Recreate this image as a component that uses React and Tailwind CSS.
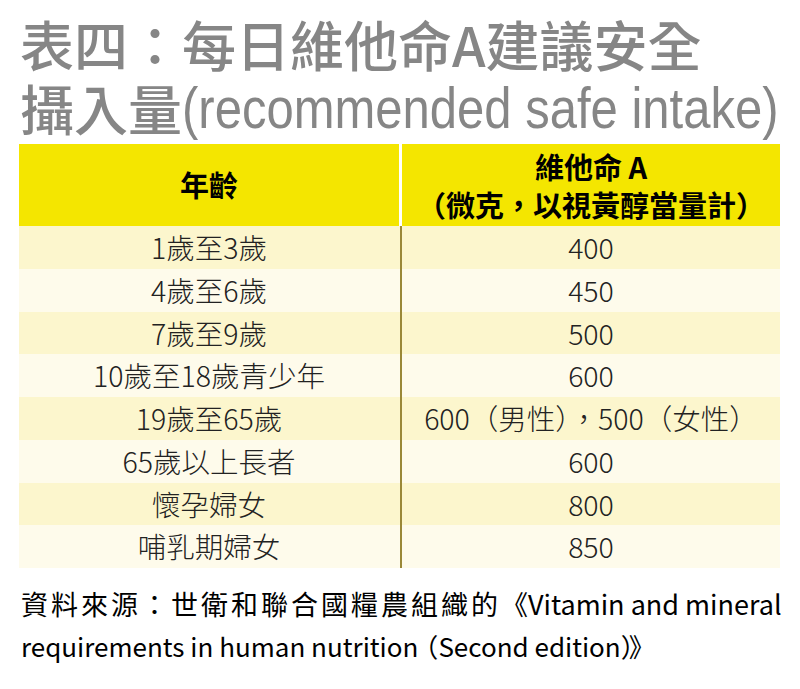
const rows = [
  ['1歲至3歲', '400'],
  ['4歲至6歲', '450'],
  ['7歲至9歲', '500'],
  ['10歲至18歲青少年', '600'],
  ['19歲至65歲', '600（男性），500（女性）'],
  ['65歲以上長者', '600'],
  ['懷孕婦女', '800'],
  ['哺乳期婦女', '850'],
];

const cjk = { fontFamily: '"Noto Sans CJK TC", "Liberation Sans", sans-serif' };

export default function App() {
  return (
    <div className="w-[800px] h-[689px] overflow-hidden bg-white" style={cjk}>
      <div className="px-[20px] pt-[12px] text-[#868686] font-medium">
        <div className="h-[64px] text-[54px] leading-[64px] whitespace-nowrap">
          表四：每日維他命A建議安全
        </div>
        <div className="flex h-[64px] text-[54px] leading-[64px] whitespace-nowrap">
          <span>攝入量</span>
          <span
            className="inline-block origin-left scale-x-[0.845] -mr-[110px] font-normal text-[58px] leading-[64px]"
            style={{ fontFamily: '"Liberation Sans", sans-serif' }}
          >
            (recommended safe intake)
          </span>
        </div>
      </div>

      <div className="mx-[19px] mt-[4px] w-[761px]">
        <div className="flex h-[82px] bg-[#f4e600] text-black font-bold">
          <div className="flex w-[380px] items-center justify-center text-[29px]">年齡</div>
          <div className="w-[3px] bg-white" />
          <div className="flex flex-1 flex-col items-center justify-center text-[29px] leading-[38px]">
            <div>維他命 A</div>
            <div>（微克，以視黃醇當量計）</div>
          </div>
        </div>
        {rows.map(([age, amount], i) => (
          <div
            key={age}
            className={`flex h-[42.75px] text-[28.5px] font-light text-[#222] ${
              i % 2 === 0 ? 'bg-[#fcf6cd]' : 'bg-[#fefbeb]'
            }`}
          >
            <div className="flex w-[380px] items-center justify-center">{age}</div>
            <div className="w-[2px] ml-[0.5px] mr-[0.5px] bg-[#9a8838]" />
            <div className="flex flex-1 items-center justify-center">{amount}</div>
          </div>
        ))}
      </div>

      <div className="px-[21px] pt-[15px] text-[27px] leading-[42px] text-black">
        <div className="whitespace-nowrap">
          <span className="tracking-[3px]">資料來源：世衛和聯合國糧農組織的</span>《Vitamin and mineral
        </div>
        <div className="whitespace-nowrap text-[26px]">
          requirements in human nutrition<span className="-ml-[6px]">（</span>Second edition
          <span className="-mr-[5px]">）</span>》
        </div>
      </div>
    </div>
  );
}
